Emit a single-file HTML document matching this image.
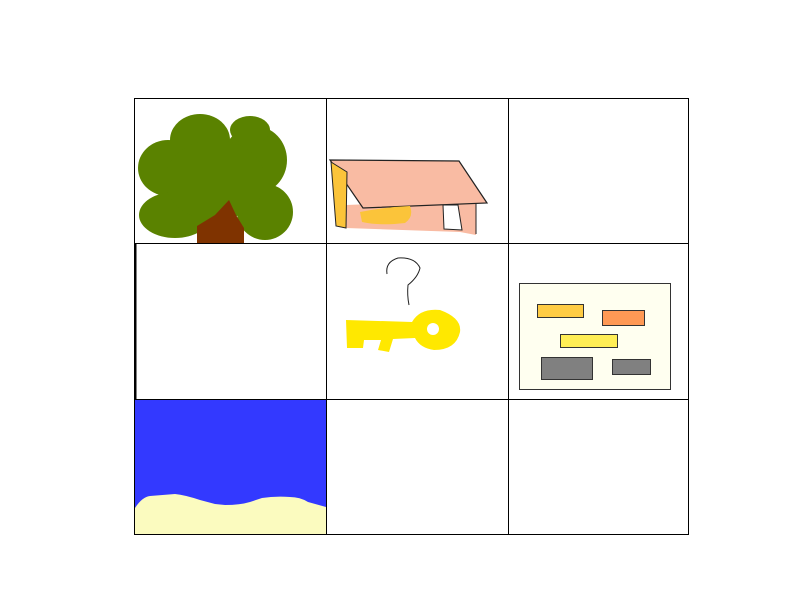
<!DOCTYPE html>
<html><head><style>html,body{margin:0;padding:0;background:#fff;width:800px;height:600px;overflow:hidden}</style></head>
<body>
<svg width="800" height="600" xmlns="http://www.w3.org/2000/svg" style="position:absolute;left:0;top:0">
<!-- sea -->
<rect x="135" y="400" width="191" height="135" fill="#3339ff"/>
<path d="M135,508 Q142,497 150,496 L175,494 Q185,495 200,500 L215,504 L225,505 Q240,505 250,502 L262,498 Q275,496 290,497 Q300,497 308,502 L326,507 L326,535 L135,535 Z" fill="#fbfbbf"/>
<!-- tree -->
<g fill="#5a8200">
<ellipse cx="168" cy="168" rx="30" ry="28"/>
<ellipse cx="200" cy="140" rx="30" ry="26"/>
<ellipse cx="255" cy="160" rx="32" ry="34"/>
<ellipse cx="175" cy="215" rx="36" ry="23"/>
<ellipse cx="265" cy="212" rx="28" ry="28"/>
<ellipse cx="215" cy="180" rx="50" ry="40"/>
<ellipse cx="250" cy="130" rx="20" ry="14"/>
</g>
<path d="M229,200 L236,215 L244,228 L244,243 L197,243 L197,226 L215,215 Z" fill="#7f3300"/>
<!-- house -->
<path d="M346,205 L476,200 L476,235 L460,232 L346,228 Z" fill="#f9bba3"/>
<path d="M330,160 L459,161 L487,203 L363,208 Z" fill="#f9bba3" stroke="#222" stroke-width="1.2"/>
<path d="M331,162 L347,172 L346,228 L336,226 Z" fill="#fbc43a" stroke="#222" stroke-width="1"/>
<path d="M360,212 Q385,207 410,206 Q414,217 405,223 Q380,226 362,222 Z" fill="#fbc43a"/>
<path d="M443,205 L458,205 L462,230 L444,229 Z" fill="#fff" stroke="#222" stroke-width="1"/>
<line x1="476" y1="203" x2="476" y2="234" stroke="#222"/>
<!-- question mark -->
<path d="M387,274 Q385,262 398,258 Q415,257 420,268 Q418,277 408,285 Q407,295 409,305" fill="none" stroke="#222" stroke-width="1"/>
<!-- key -->
<path d="M346,320 L412,322 Q420,308 440,310 Q462,318 460,332 Q456,350 434,350 Q420,348 415,338 L393,339 L389,352 L378,350 L381,340 L364,340 L363,348 L347,348 Z" fill="#ffe800"/>
<circle cx="433" cy="329" r="6" fill="#fff"/>
<!-- box -->
<rect x="519.5" y="283.5" width="151" height="106" fill="#fffff0" stroke="#333"/>
<rect x="537.5" y="304.5" width="46" height="13" fill="#ffcc44" stroke="#333"/>
<rect x="602.5" y="310.5" width="42" height="15" fill="#ff9955" stroke="#333"/>
<rect x="560.5" y="334.5" width="57" height="13" fill="#ffee55" stroke="#333"/>
<rect x="541.5" y="357.5" width="51" height="22" fill="#808080" stroke="#333"/>
<rect x="612.5" y="359.5" width="38" height="15" fill="#808080" stroke="#333"/>
<!-- grid -->
<g stroke="#000" stroke-width="1" fill="none">
<rect x="134.5" y="98.5" width="554" height="436"/>
<line x1="326.5" y1="98" x2="326.5" y2="535"/>
<line x1="508.5" y1="98" x2="508.5" y2="535"/>
<line x1="134" y1="243.5" x2="689" y2="243.5"/>
<line x1="134" y1="399.5" x2="689" y2="399.5"/>
<line x1="135.5" y1="243" x2="135.5" y2="399" stroke-width="2"/>
</g>
</svg>
</body></html>
